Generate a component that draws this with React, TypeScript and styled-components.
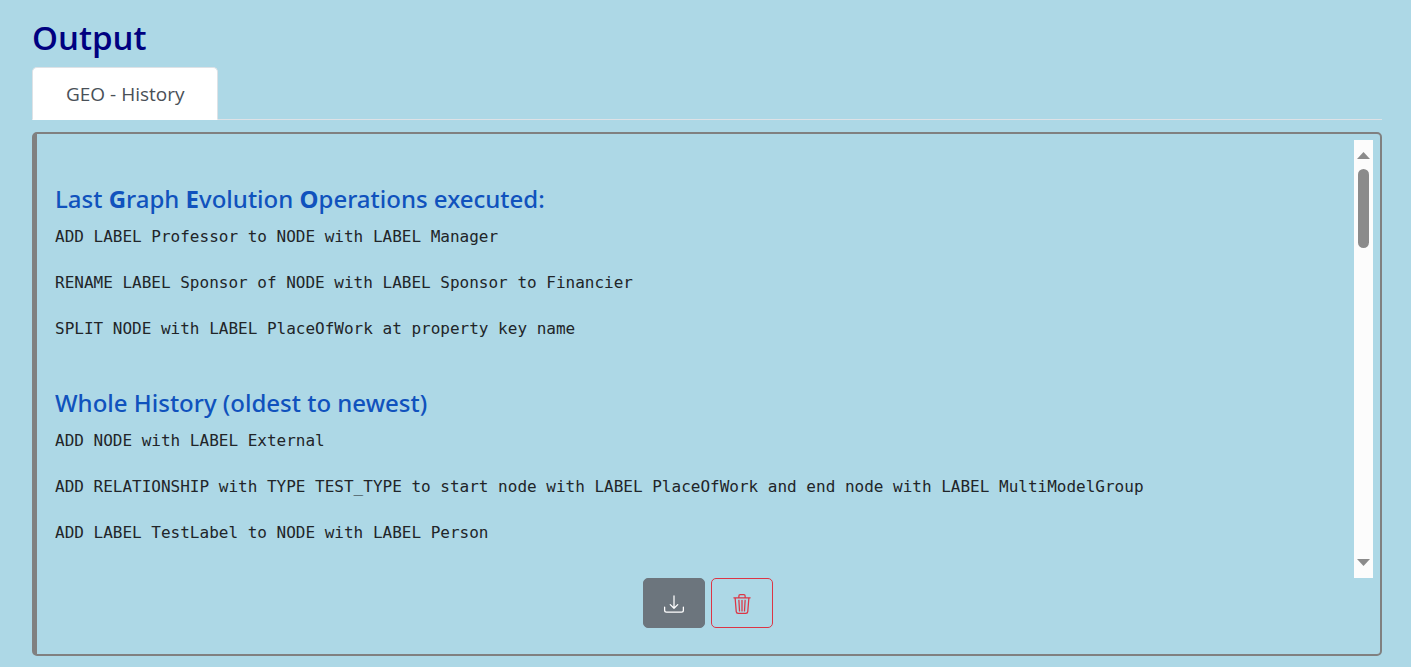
import React, { useRef, useState } from 'react';
import styled, { createGlobalStyle } from 'styled-components';
import { BsDownload, BsTrash3 } from 'react-icons/bs';

const sans = '"Segoe UI", "Open Sans", "Noto Sans", sans-serif';
const headingSans = '"Segoe UI", "Noto Sans", "Open Sans", sans-serif';
const mono = 'Consolas, "DejaVu Sans Mono", monospace';

const GlobalStyle = createGlobalStyle`
  *, *::before, *::after { box-sizing: border-box; }
  body {
    margin: 0;
    background: lightblue;
    color: #212529;
    font-family: ${sans};
    font-size: 18px;
  }
`;

const Page = styled.main`
  padding: 16px 29px 11px 32px;
`;

const Title = styled.h1`
  margin: 0 0 8px;
  color: navy;
  font-size: 33px;
  font-weight: 600;
  line-height: 43px;
`;

const Tabs = styled.div`
  display: flex;
  border-bottom: 1px solid #dee2e6;
`;

const Tab = styled.button`
  height: 53px;
  margin-bottom: -1px;
  padding: 0 33px;
  border: 1px solid #dee2e6;
  border-bottom-color: #fff;
  border-radius: 5px 5px 0 0;
  background: #fff;
  color: #495057;
  font-family: inherit;
  font-size: 19px;
  line-height: 28px;
`;

const Panel = styled.section`
  margin-top: 12px;
  padding: 6px 7px 26px 18px;
  border: 2px solid gray;
  border-left-width: 5px;
  border-radius: 5px;
`;

const Viewport = styled.div`
  display: flex;
  height: 438px;
`;

const Scroller = styled.div`
  flex: 1;
  min-width: 0;
  padding-top: 43px;
  overflow-y: auto;
  scrollbar-width: none;
`;

const Rail = styled.div`
  display: flex;
  flex-direction: column;
  align-items: center;
  justify-content: space-between;
  width: 19px;
  padding: 12px 0;
  background: #fcfcfc;
`;

const Track = styled.div`
  flex: 1;
  margin: 10px 0;
`;

const Thumb = styled.div`
  width: 11px;
  height: 79px;
  border-radius: 6px;
  background: #8b8b8b;
`;

const Group = styled.section`
  padding-bottom: 24px;
`;

const Heading = styled.h2`
  margin: 0 0 10px;
  color: #1052bd;
  font-family: ${headingSans};
  font-size: 24px;
  font-weight: 500;
  line-height: 32px;

  b { font-weight: 700; }
`;

const Operation = styled.p`
  margin: 0 0 23px;
  font-family: ${mono};
  font-size: 16px;
  line-height: 23px;
`;

const Actions = styled.div`
  display: flex;
  justify-content: center;
  gap: 6px;
  padding-right: 12px;
`;

const ActionButton = styled.button<{ $danger?: boolean }>`
  display: flex;
  align-items: center;
  justify-content: center;
  width: 62px;
  height: 50px;
  padding: 2px 0 0;
  border: 1px solid ${(p) => (p.$danger ? '#dc3545' : '#6c757d')};
  border-radius: 5px;
  background: ${(p) => (p.$danger ? 'transparent' : '#6c757d')};
  color: ${(p) => (p.$danger ? '#dc3545' : '#fff')};
  font-size: 20px;
`;

const lastOperations = [
  'ADD LABEL Professor to NODE with LABEL Manager',
  'RENAME LABEL Sponsor of NODE with LABEL Sponsor to Financier',
  'SPLIT NODE with LABEL PlaceOfWork at property key name',
];

const history = [
  'ADD NODE with LABEL External',
  'ADD RELATIONSHIP with TYPE TEST_TYPE to start node with LABEL PlaceOfWork and end node with LABEL MultiModelGroup',
  'ADD LABEL TestLabel to NODE with LABEL Person',
];

function Operations({ items }: { items: string[] }) {
  return (
    <>
      {items.map((item) => (
        <Operation key={item}>{item}</Operation>
      ))}
    </>
  );
}

function Arrow({ down }: { down?: boolean }) {
  return (
    <svg width="13" height="7" viewBox="0 0 13 7" aria-hidden="true">
      <path d={down ? 'M0 0H13L6.5 7Z' : 'M0 7H13L6.5 0Z'} fill="#8b8b8b" />
    </svg>
  );
}

export default function App() {
  const scroller = useRef<HTMLDivElement>(null);
  const [offset, setOffset] = useState(0);

  const follow = () => {
    const el = scroller.current;
    if (!el) return;
    const range = el.scrollHeight - el.clientHeight;
    setOffset(range > 0 ? (el.scrollTop / range) * 301 : 0);
  };

  return (
    <>
      <GlobalStyle />
      <Page>
        <Title>Output</Title>
        <Tabs role="tablist">
          <Tab role="tab" type="button" aria-selected="true">GEO - History</Tab>
        </Tabs>
        <Panel role="tabpanel">
          <Viewport>
            <Scroller ref={scroller} onScroll={follow} tabIndex={0}>
              <Group>
                <Heading>
                  Last <b>G</b>raph <b>E</b>volution <b>O</b>perations executed:
                </Heading>
                <Operations items={lastOperations} />
              </Group>
              <Group>
                <Heading>Whole History (oldest to newest)</Heading>
                <Operations items={history} />
              </Group>
            </Scroller>
            <Rail aria-hidden="true">
              <Arrow />
              <Track>
                <Thumb style={{ transform: `translateY(${offset}px)` }} />
              </Track>
              <Arrow down />
            </Rail>
          </Viewport>
          <Actions>
            <ActionButton type="button" aria-label="Download history">
              <BsDownload />
            </ActionButton>
            <ActionButton type="button" $danger aria-label="Delete history">
              <BsTrash3 />
            </ActionButton>
          </Actions>
        </Panel>
      </Page>
    </>
  );
}
